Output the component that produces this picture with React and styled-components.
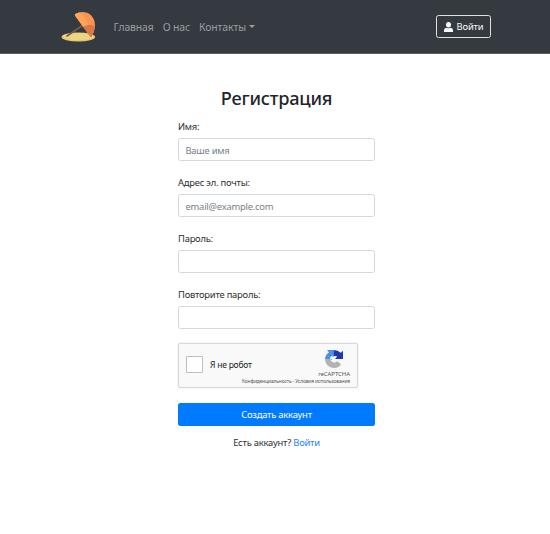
import React from "react";
import styled, { createGlobalStyle } from "styled-components";

const GlobalStyle = createGlobalStyle`
  * { box-sizing: border-box; }
  body {
    margin: 0;
    background: #fff;
    color: #2b2f33;
    font-family: "Noto Sans", "Open Sans", sans-serif;
    font-size: 9.4px;
    letter-spacing: -0.22px;
    line-height: 14px;
  }
`;

const Navbar = styled.header`
  display: flex;
  align-items: center;
  height: 54px;
  padding: 0 59px 0 60px;
  background: #343a40;
  border-bottom: 1px solid #5b5f64;
`;

const Logo = styled.svg`
  width: 37px;
  height: 34px;
  flex: none;
`;

const NavLinks = styled.nav`
  display: flex;
  flex: 1;
  gap: 9px;
  margin-left: 16.5px;
`;

const NavLink = styled.a`
  display: flex;
  align-items: center;
  gap: 3px;
  color: #9a9da0;
  font-size: 10.4px;
  letter-spacing: -0.1px;
  white-space: nowrap;
`;

const Caret = styled.span`
  border: 3.5px solid transparent;
  border-top-color: currentColor;
  border-bottom: 0;
`;

const LoginButton = styled.button`
  display: flex;
  align-items: center;
  justify-content: center;
  gap: 4px;
  width: 55px;
  height: 23px;
  padding: 0;
  background: transparent;
  border: 1px solid #dfe1e3;
  border-radius: 2.5px;
  color: #f8f9fa;
  font: inherit;
  letter-spacing: -0.15px;
`;

const UserIcon = styled.svg`
  width: 9px;
  height: 10px;
`;

const Form = styled.form`
  width: 197px;
  margin: 32px 0 0 178px;
`;

const Title = styled.h1`
  margin: 0;
  color: #212529;
  text-align: center;
  font-size: 18.2px;
  letter-spacing: -0.2px;
  line-height: 24px;
  font-weight: 500;
`;

const Field = styled.div`
  display: flex;
  flex-direction: column;
  height: 56px;
`;

const Label = styled.label`
  margin-bottom: 4px;
`;

const Input = styled.input`
  width: 100%;
  height: 23px;
  padding: 1px 6.5px 0;
  border: 1px solid #d3d8dd;
  border-radius: 2.5px;
  background: #fff;
  font: inherit;
  letter-spacing: inherit;
  &::placeholder { color: #788088; opacity: 1; }
`;

const Fields = styled.div`
  margin-top: 10px;
`;

const Captcha = styled.div`
  display: flex;
  align-items: center;
  width: 180px;
  height: 45px;
  margin-top: -1px;
  padding: 0 7px;
  background: #f9f9f9;
  border: 1px solid #d8d8d8;
  border-radius: 2px;
  box-shadow: 0 0 2px rgba(0, 0, 0, 0.12);
`;

const CheckBox = styled.span`
  width: 17px;
  height: 17px;
  margin-bottom: 2px;
  border: 1px solid #bdbdbd;
  border-radius: 1px;
  background: #fff;
`;

const CaptchaText = styled.span`
  flex: 1;
  margin: 0 0 2px 7px;
  font-size: 8.5px;
  color: #222;
  white-space: nowrap;
`;

const CaptchaBrand = styled.div`
  display: flex;
  flex-direction: column;
  align-items: flex-end;
  width: 0;
  white-space: nowrap;
  color: #555;
`;

const CaptchaLogo = styled.svg`
  width: 20px;
  height: 20px;
  margin: 2px 6px 0 0;
`;

const BrandName = styled.span`
  margin-top: 1px;
  font-size: 6px;
  letter-spacing: -0.05px;
  line-height: 8px;
`;

const Legal = styled.span`
  font-size: 4.9px;
  letter-spacing: -0.12px;
  line-height: 7px;
  color: #555;
`;

const Submit = styled.button`
  display: block;
  width: 100%;
  height: 23px;
  margin-top: 15px;
  padding: 0;
  border: 0;
  border-radius: 2.5px;
  background: #007bff;
  color: #fff;
  font: inherit;
  letter-spacing: inherit;
`;

const Footer = styled.p`
  margin: 10px 0 0;
  text-align: center;
`;

const Link = styled.a`
  color: #2585f5;
`;

const fields = [
  { label: "Имя:", type: "text", placeholder: "Ваше имя" },
  { label: "Адрес эл. почты:", type: "email", placeholder: "email@example.com" },
  { label: "Пароль:", type: "password" },
  { label: "Повторите пароль:", type: "password" },
];

export default function App() {
  return (
    <>
      <GlobalStyle />
      <Navbar>
        <Logo viewBox="0 0 37 34">
          <ellipse cx="18.3" cy="27" rx="16.8" ry="4.6" fill="#e3c56f" />
          <ellipse cx="18.3" cy="26.6" rx="15.5" ry="3.6" fill="#ecd583" />
          <path d="M7 26 24 14.5" stroke="#795c48" strokeWidth="1.7" strokeLinecap="round" />
          <path d="M15 4.3C20 1 27 1.5 31 5.2C36.5 10.5 36 19 31.3 27.2Q30.2 27.2 29.5 25.5L15.3 6Q14.6 5 15 4.3Z" fill="#f99550" />
          <path d="M23 16.8Q28 13.6 35 16Q34.7 21.5 31.3 27.2Q30.2 27.2 29.5 25.5Z" fill="#dc7649" />
          <path d="M15 4.3Q17 3 20 2.4Q26 6 28 15Q25 15.3 23 16.8L15.3 6Q14.6 5 15 4.3Z" fill="#ffa458" />
        </Logo>
        <NavLinks>
          <NavLink>Главная</NavLink>
          <NavLink>О нас</NavLink>
          <NavLink>Контакты<Caret /></NavLink>
        </NavLinks>
        <LoginButton type="button">
          <UserIcon viewBox="0 0 9 10" fill="currentColor">
            <ellipse cx="4.5" cy="2.7" rx="2.5" ry="2.7" />
            <path d="M0 10V8Q0 6 2.5 5.7Q4.5 7 6.5 5.7Q9 6 9 8V10Z" />
          </UserIcon>
          Войти
        </LoginButton>
      </Navbar>
      <Form>
        <Title>Регистрация</Title>
        <Fields>
          {fields.map((f) => (
            <Field key={f.label}>
              <Label>{f.label}</Label>
              <Input type={f.type} placeholder={f.placeholder} />
            </Field>
          ))}
        </Fields>
        <Captcha>
          <CheckBox />
          <CaptchaText>Я не робот</CaptchaText>
          <CaptchaBrand>
            <CaptchaLogo viewBox="0 0 20 20">
              <path d="M9.5 1H3L5 3.2Q1.2 6 1 10H6Q6.2 7.5 7.8 6.8L9.5 8.5Z" fill="#4a90f3" />
              <path d="M9.5 1Q14 1 16.7 3.7L19 1.7V10H11L13.2 7.5Q12 6.8 9.5 7Z" fill="#1c3aa9" />
              <path d="M1 10H8.5L6.7 11.8Q8 13.8 10.5 13.6Q12 13.5 13 12.2L14.5 13L17 15.5Q14.5 19 10 19Q4 18.5 2 14Q1 12 1 10Z" fill="#b3b3b3" />
            </CaptchaLogo>
            <BrandName>reCAPTCHA</BrandName>
            <Legal>Конфиденциальность - Условия использования</Legal>
          </CaptchaBrand>
        </Captcha>
        <Submit type="button">Создать аккаунт</Submit>
        <Footer>Есть аккаунт? <Link>Войти</Link></Footer>
      </Form>
    </>
  );
}
